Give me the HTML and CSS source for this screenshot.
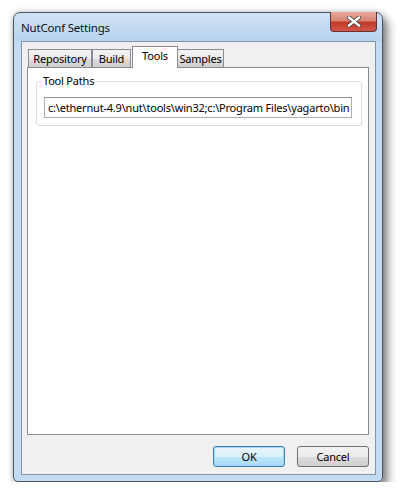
FILE: index.html
```html
<!DOCTYPE html>
<html>
<head>
<meta charset="utf-8">
<link rel="stylesheet" href="styles.css">
</head>
<body>
<div class="window">
  <div class="titlebar">
    <span class="title">NutConf Settings</span>
    <div class="close">
      <svg width="14" height="11" viewBox="0 0 14 11"><path d="M2 1.5 L12 9.5 M12 1.5 L2 9.5" stroke="#3a3a3a" stroke-width="4" stroke-linecap="square"/><path d="M2 1.5 L12 9.5 M12 1.5 L2 9.5" stroke="#ffffff" stroke-width="2.4" stroke-linecap="square"/></svg>
    </div>
  </div>
  <div class="client">
    <div class="tabs">
      <div class="tab">Repository</div>
      <div class="tab">Build</div>
      <div class="tab active">Tools</div>
      <div class="tab">Samples</div>
    </div>
    <div class="panel">
      <fieldset class="group">
        <legend>Tool Paths</legend>
        <div class="input">c:\ethernut-4.9\nut\tools\win32;c:\Program Files\yagarto\bin</div>
      </fieldset>
    </div>
    <div class="buttons">
      <div class="btn default">OK</div>
      <div class="btn">Cancel</div>
    </div>
  </div>
</div>
</body>
</html>
```
FILE: styles.css
```css
*, *::before, *::after { box-sizing: border-box; }
html, body { margin: 0; padding: 0; background: #ffffff; }
body { font-family: "Noto Sans", "Open Sans", sans-serif; font-size: 11px; letter-spacing: -0.2px; color: #000; }

.window {
  margin: 12px 0 0 13px;
  width: 370px;
  height: 470px;
  border: 1px solid #4b5660;
  border-radius: 7px 7px 5px 5px;
  background: linear-gradient(180deg, #cfe2f5 0px, #b9d3ee 28px, #c3dcf4 29px, #c3dcf4 100%);
  box-shadow: 5px 6px 10px rgba(0,0,0,0.45), 0 0 6px rgba(0,0,0,0.25);
  padding: 0 6px 6px 7px;
  display: flex;
  flex-direction: column;
}

.titlebar {
  height: 28px;
  flex: none;
  display: flex;
  align-items: flex-start;
  position: relative;
}
.title {
  margin: 7px 0 0 0;
  font-size: 11.5px;
  color: #111;
  line-height: 15px;
}
.close {
  position: absolute;
  right: -1px;
  top: -1px;
  width: 47px;
  height: 20px;
  border: 1px solid #6b3030;
  border-top: none;
  border-radius: 0 0 4px 4px;
  background: linear-gradient(180deg, #e8a898 0%, #d98677 45%, #c0392b 55%, #d4574a 100%);
  display: flex;
  align-items: center;
  justify-content: center;
}

.client {
  flex: 1;
  border: 1px solid #8494a6;
  background: #f0f0f0;
  display: flex;
  flex-direction: column;
  padding: 0 6px 0 5px;
}

.tabs {
  display: flex;
  align-items: flex-end;
  height: 25px;
  flex: none;
  margin-left: 1px;
  position: relative;
  z-index: 1;
}
.tab {
  height: 18px;
  border: 1px solid #898c95;
  border-bottom: none;
  background: linear-gradient(180deg, #f3f3f3 0%, #ebebeb 50%, #dddddd 51%, #cfcfcf 100%);
  padding: 0;
  line-height: 17px;
  text-align: center;
  white-space: nowrap;
}
.tab:nth-child(1) { width: 64px; }
.tab:nth-child(2) { width: 39px; margin-left: 0px; }
.tab:nth-child(4) { width: 47px; margin-left: 0px; }
.tab.active {
  width: 46px;
  height: 22px;
  background: #ffffff;
  line-height: 18px;
  margin-bottom: -1px;
  margin-left: 1px;
  margin-right: -1px;
  z-index: 2;
  position: relative;
}

.panel {
  height: 368px;
  flex: none;
  border: 1px solid #898c95;
  background: #ffffff;
  padding: 6px 6px 0 8px;
}

.group {
  margin: 0;
  min-width: 0;
  border: 1px solid #d5dfe5;
  border-radius: 3px;
  padding: 9px 9px 7px 7px;
}
.group legend {
  padding: 0 2px;
  margin-left: -3px;
  color: #000;
  line-height: 14px;
}
.input {
  height: 21px;
  border: 1px solid #abadb3;
  border-top-color: #8e9198;
  background: #fff;
  line-height: 19px;
  padding-left: 3px;
  white-space: nowrap;
  overflow: hidden;
}

.buttons {
  display: flex;
  justify-content: flex-end;
  gap: 12px;
  margin-top: 11px;
  padding-right: 0px;
}
.btn {
  width: 72px;
  height: 21px;
  border: 1px solid #707070;
  border-radius: 3px;
  background: linear-gradient(180deg, #f2f2f2 0%, #ebebeb 50%, #dddddd 51%, #cfcfcf 100%);
  text-align: center;
  line-height: 19px;
}
.btn.default {
  border-color: #3c7fb1;
  background: linear-gradient(180deg, #eaf6fd 0%, #d9f0fc 50%, #bee6fd 51%, #a7d9f5 100%);
  box-shadow: inset 0 0 0 1px #a2d7f6;
}
```
